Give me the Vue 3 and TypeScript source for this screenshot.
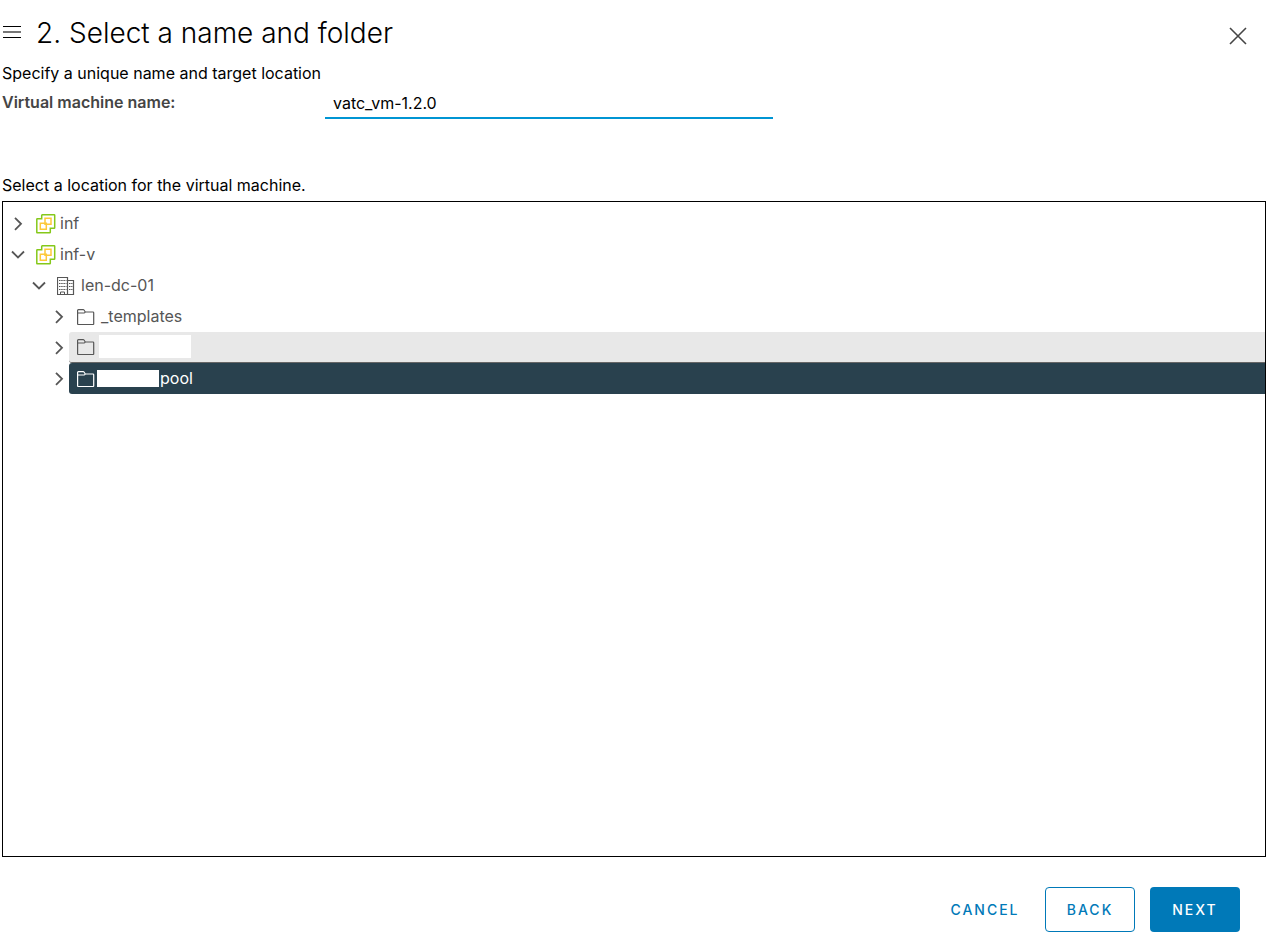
<script setup lang="ts">
import { ref } from 'vue'

type Kind = 'vcenter' | 'datacenter' | 'folder'

interface TreeNode {
  id: number
  level: number
  kind: Kind
  label: string
  open: boolean
  mask?: 'wide' | 'short'
}

const vmName = ref('vatc_vm-1.2.0')
const selected = ref(6)
const nodes = ref<TreeNode[]>([
  { id: 1, level: 0, kind: 'vcenter', label: 'inf', open: false },
  { id: 2, level: 0, kind: 'vcenter', label: 'inf-v', open: true },
  { id: 3, level: 1, kind: 'datacenter', label: 'len-dc-01', open: true },
  { id: 4, level: 2, kind: 'folder', label: '_templates', open: false },
  { id: 5, level: 2, kind: 'folder', label: '', open: false, mask: 'wide' },
  { id: 6, level: 2, kind: 'folder', label: 'pool', open: false, mask: 'short' },
])
</script>

<template>
  <main class="wizard">
    <header class="head">
      <button class="icon-btn menu" type="button" aria-label="Steps">
        <svg width="18" height="14" viewBox="0 0 18 14" fill="none">
          <path d="M0 1.5h18M0 12.5h18" stroke="#000" />
          <path d="M0 7h18" stroke="#777" stroke-width="2" />
        </svg>
      </button>
      <h1>2. Select a name and folder</h1>
      <button class="icon-btn close" type="button" aria-label="Close">
        <svg width="18" height="18" viewBox="0 0 18 18" fill="none" stroke="#454545" stroke-width="1.6">
          <path d="M1 1l16 16M17 1L1 17" />
        </svg>
      </button>
    </header>

    <p class="intro">Specify a unique name and target location</p>
    <div class="field">
      <label for="vm-name">Virtual machine name:</label>
      <input id="vm-name" v-model="vmName" type="text" />
    </div>

    <p class="prompt">Select a location for the virtual machine.</p>
    <ul class="tree" role="tree">
      <li
        v-for="n in nodes"
        :key="n.id"
        :class="['row', 'level-' + n.level]"
        role="treeitem"
        :aria-selected="n.id === selected"
      >
        <button class="icon-btn caret" type="button" aria-label="Toggle" @click="n.open = !n.open">
          <svg width="14" height="14" viewBox="0 0 14 14" fill="none" stroke="#565656" stroke-width="1.8">
            <path v-if="n.open" d="M1 3.5l6 6 6-6" />
            <path v-else d="M4 .8l6 6-6 6" />
          </svg>
        </button>
        <button
          type="button"
          :class="['node', { selected: n.id === selected, hovered: n.mask === 'wide' && n.id !== selected }]"
          @click="selected = n.id"
        >
          <svg v-if="n.kind === 'vcenter'" class="glyph" width="20" height="20" viewBox="0 0 20 20" fill="none" stroke-width="1.5">
            <path d="M5.7 4.7V1.3Q5.7.8 6.2.8H18.2Q18.7.8 18.7 1.3V13.8Q18.7 14.3 18.2 14.3H14.3V18.3Q14.3 18.8 13.8 18.8H1.3Q.8 18.8.8 18.3V5.2Q.8 4.7 1.3 4.7Z" stroke="#85c81a" />
            <path d="M9 4.3H15V10.3H9ZM4.3 9.3H10.3V15.3H4.3Z" stroke="#fdc93a" />
          </svg>
          <svg v-else-if="n.kind === 'datacenter'" class="glyph" width="20" height="20" viewBox="0 0 20 20" fill="none" stroke="#565656">
            <path d="M10.5 18.5H.5V1.5H10.5V18.5ZM10.5 4.5H16.5V18.5H10.5" stroke-width="1.2" />
            <path d="M2 4.5H9.5M2 7.5H9.5M2 10.5H9.5M2 13.5H9.5M12 7.5H15.5M12 10.5H15.5M12 13.5H15.5" stroke-dasharray="1.5 .7" />
            <path d="M3.5 18.5V16H7.5V18.5" />
          </svg>
          <svg v-else class="glyph" width="20" height="20" viewBox="0 0 20 20" fill="none" stroke="currentColor" stroke-width="1.2">
            <path d="M.6 17V3.4Q.6 2.6 1.4 2.6H6.2Q6.7 2.6 7 3L8.3 5H15.9Q16.7 5 16.7 5.8V17Q16.7 17.5 16.2 17.5H1.1Q.6 17.5.6 17ZM.6 6H7Q7.7 6 8.3 5" />
          </svg>
          <span v-if="n.mask" :class="['mask', n.mask]"></span>
          <span class="name">{{ n.label }}</span>
        </button>
      </li>
    </ul>

    <footer class="actions">
      <button class="btn flat" type="button">CANCEL</button>
      <button class="btn outline" type="button">BACK</button>
      <button class="btn primary" type="button">NEXT</button>
    </footer>
  </main>
</template>

<style>
body {
  margin: 0;
  background: #fff;
}
</style>

<style scoped>
.wizard {
  box-sizing: border-box;
  min-height: 100vh;
  display: flex;
  flex-direction: column;
  padding: 12px 3px 16px 2px;
  font-family: Inter, "Liberation Sans", sans-serif;
  font-size: 16px;
  line-height: 24px;
  color: #000;
}

button,
input {
  font: inherit;
}

.icon-btn {
  display: flex;
  align-items: center;
  justify-content: center;
  padding: 0;
  border: 0;
  background: none;
  cursor: pointer;
}

.head {
  display: flex;
  align-items: center;
  height: 40px;
}

.menu {
  width: 20px;
  height: 40px;
}

h1 {
  flex: 1;
  margin: 0 0 0 14px;
  padding-top: 2px;
  font-size: 28px;
  line-height: 40px;
  font-weight: 300;
}

.close {
  width: 24px;
  height: 24px;
  margin: 8px 16px 0 0;
}

p {
  margin: 0;
}

.intro {
  margin-top: 9px;
}

.field {
  display: flex;
  height: 32px;
  margin-top: 2px;
}

label {
  width: 323px;
  line-height: 30px;
  font-weight: 600;
  color: #454545;
}

input {
  box-sizing: border-box;
  width: 448px;
  padding: 2px 8px 0;
  border: 0;
  border-bottom: 2px solid #0095d3;
  outline: 0;
  background: none;
  color: #000;
}

.prompt {
  margin-top: 54px;
}

.tree {
  flex: 1;
  margin: 4px 0 30px;
  padding: 6px 0;
  border: 1px solid #000;
  list-style: none;
}

.row {
  display: flex;
  height: 31px;
}

.level-0 {
  padding-left: 5px;
}

.level-1 {
  padding-left: 26px;
}

.level-2 {
  padding-left: 46px;
}

.caret {
  width: 20px;
}

.node {
  flex: 1;
  display: flex;
  align-items: center;
  padding: 0 8px;
  border: 0;
  border-radius: 3px 0 0 3px;
  background: none;
  color: #565656;
  text-align: left;
  cursor: pointer;
}

.glyph {
  margin-right: 4px;
}

.name {
  padding-bottom: 2px;
}

.hovered {
  background: #e8e8e8;
  border-bottom: 1px solid #666;
}

.selected {
  background: #29414e;
  color: #fff;
}

.mask {
  background: #fff;
}

.mask.wide {
  width: 92px;
  height: 23px;
  margin: 0 0 2px -2px;
}

.mask.short {
  width: 62px;
  height: 17px;
  margin: 0 1px 0 -4px;
}

.actions {
  display: flex;
  justify-content: flex-end;
  gap: 15px;
  padding-right: 26px;
}

.btn {
  box-sizing: border-box;
  min-width: 90px;
  height: 45px;
  padding: 0 9px;
  border: 1px solid transparent;
  border-radius: 4px;
  background: #fff;
  color: #0079b8;
  font-size: 14px;
  font-weight: 500;
  letter-spacing: 2px;
  cursor: pointer;
}

.outline {
  border-color: #0079b8;
}

.primary {
  background: #0079b8;
  color: #fff;
}
</style>
